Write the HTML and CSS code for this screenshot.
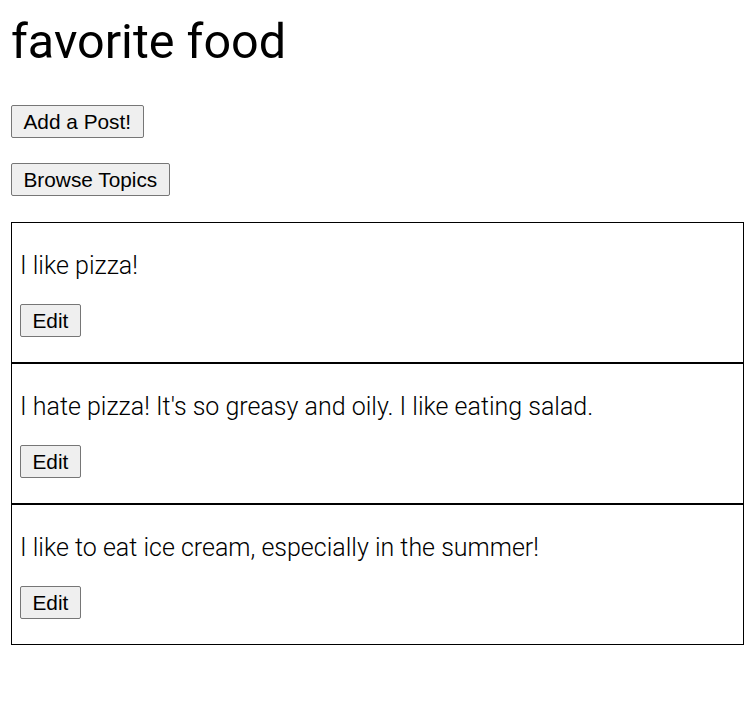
FILE: index.html
```html
<!DOCTYPE html>
<html>
<head>
<meta charset="utf-8">
<link rel="stylesheet" href="styles.css">
</head>
<body>
<div class="page">
  <h1 class="title">favorite food</h1>
  <div class="actions">
    <button class="btn">Add a Post!</button>
    <button class="btn">Browse Topics</button>
  </div>
  <div class="posts">
    <div class="post">
      <p class="post-text">I like pizza!</p>
      <button class="btn">Edit</button>
    </div>
    <div class="post">
      <p class="post-text">I hate pizza! It's so greasy and oily. I like eating salad.</p>
      <button class="btn">Edit</button>
    </div>
    <div class="post">
      <p class="post-text">I like to eat ice cream, especially in the summer!</p>
      <button class="btn">Edit</button>
    </div>
  </div>
</div>
</body>
</html>
```
FILE: styles.css
```css
html, body { margin: 0; padding: 0; background: #fff; }
.page {
  padding: 0 9px 0 11px;
  font-family: Roboto, "Liberation Sans", sans-serif;
  color: #000;
}
.title {
  margin: 0;
  padding-top: 14px;
  font-size: 48.5px;
  font-weight: 400;
  line-height: 56px;
  height: 56px;
}
.actions {
  display: flex;
  flex-direction: column;
  align-items: flex-start;
  gap: 25px;
  margin-top: 35px;
}
.btn {
  font-family: "Liberation Sans", Arial, sans-serif;
  font-size: 20.8px;
  padding: 0 11.5px;
  height: 33px;
  border: 1px solid #767676;
  border-radius: 2px;
  background: #efefef;
  color: #000;
}
.posts {
  margin-top: 26px;
  display: flex;
  flex-direction: column;
}
.post {
  border: 1px solid #000;
  height: 139px;
  padding: 0 8px;
  box-sizing: content-box;
}
.post-text {
  margin: 27px 0 0 0;
  font-size: 25px;
  font-weight: 300;
  line-height: 32px;
}
.post .btn {
  margin-top: 22px;
}
```
